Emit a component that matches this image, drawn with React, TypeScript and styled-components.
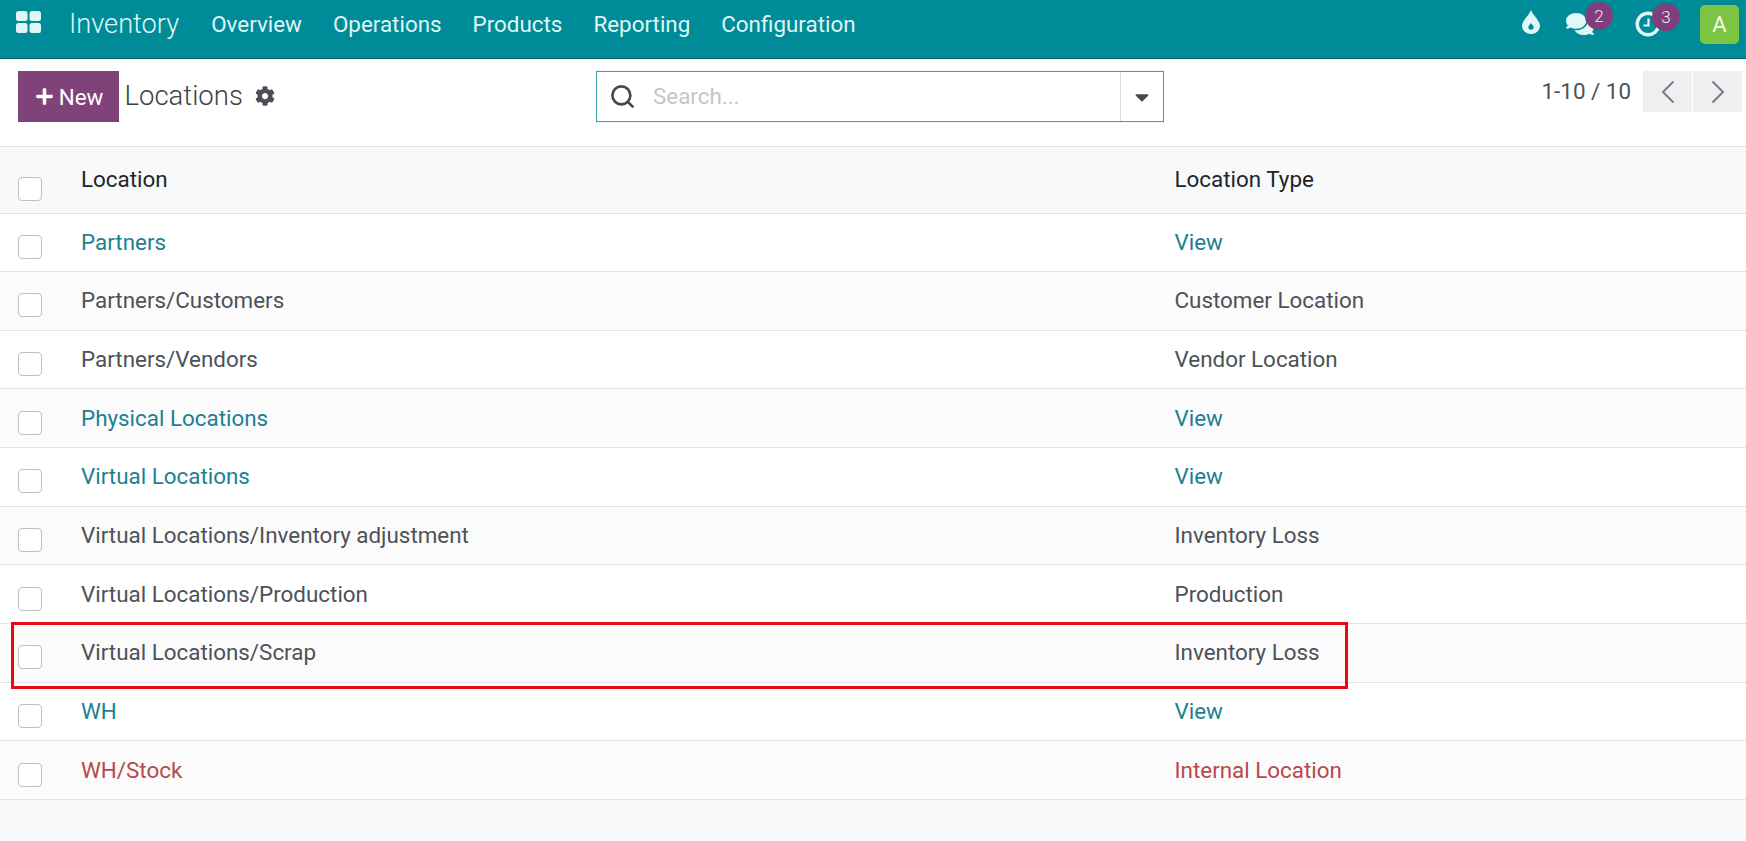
import React from 'react';
import styled, {createGlobalStyle} from 'styled-components';
import {FaCaretDown, FaCog, FaComments, FaPlus} from 'react-icons/fa';
import {ChevronLeft, ChevronRight, Search} from 'lucide-react';

const GlobalStyle = createGlobalStyle`
    html, body {
        margin: 0;
        padding: 0;
        background: #f8f9fb;
        font-family: Roboto, "Liberation Sans", sans-serif;
    }
`;

const Page = styled.div`
    width: 1746px;
    height: 841px;
    overflow: hidden;
    display: flex;
    flex-direction: column;
    background: #f8f9fb;
`;

const TopBar = styled.header`
    height: 59px;
    flex: none;
    box-sizing: border-box;
    display: flex;
    align-items: center;
    padding-bottom: 10px;
    background: #008b99;
    border-bottom: 1px solid #0d5b62;
    color: #dff7f7;
`;

const AppsIcon = styled.svg`
    width: 25px;
    height: 22px;
    margin: -4px 0 0 16px;
    fill: #e0f6f6;
`;

const Brand = styled.span`
    font-size: 27.2px;
    font-weight: 300;
    margin-left: 28px;
    margin-right: 32px;
`;

const NavItem = styled.span`
    font-size: 22.4px;
    margin-right: 31px;
    color: #dff7f7;
`;

const Systray = styled.div`
    margin-left: auto;
    display: flex;
    align-items: center;
`;

const TrayIcon = styled.span<{$gap: number}>`
    position: relative;
    display: flex;
    align-items: center;
    justify-content: center;
    margin-right: ${p => p.$gap}px;
    color: #e0f8f8;
`;

const DropIcon = styled.svg`
    width: 18px;
    height: 24px;
    margin-top: -4px;
`;

const Badge = styled.span`
    position: absolute;
    top: -8px;
    right: -19px;
    width: 28px;
    height: 28px;
    border-radius: 50%;
    background: #7f3f7a;
    color: #f2e6f0;
    font-size: 17px;
    font-weight: 300;
    display: flex;
    align-items: center;
    justify-content: center;
`;

const Avatar = styled.span`
    width: 39px;
    height: 39px;
    margin-right: 7px;
    margin-top: 1px;
    border-radius: 5px;
    background: #7cc444;
    color: #f2fbe8;
    font-size: 22px;
    display: flex;
    align-items: center;
    justify-content: center;
`;

const ControlPanel = styled.div`
    height: 88px;
    flex: none;
    position: relative;
    display: flex;
    align-items: flex-start;
    padding: 12px 4px 0 18px;
    box-sizing: border-box;
    background: #fff;
    border-bottom: 1px solid #dee2e6;
`;

const NewButton = styled.button`
    width: 101px;
    height: 51px;
    border: 0;
    padding: 0 0 0 1px;
    background: #7f4279;
    color: #fff;
    font: 400 22.4px Roboto, sans-serif;
    display: flex;
    align-items: center;
    justify-content: center;
    gap: 5px;
`;

const Title = styled.span`
    font-size: 27.5px;
    font-weight: 300;
    color: #3c4147;
    margin: 9px 0 0 5.5px;
    line-height: 32px;
`;

const Gear = styled(FaCog)`
    width: 20px;
    height: 20px;
    margin: 15px 0 0 12px;
    color: #4a4f55;
`;

const SearchBox = styled.div`
    position: absolute;
    left: 596px;
    top: 12px;
    width: 568px;
    height: 51px;
    box-sizing: border-box;
    display: flex;
    align-items: center;
    border: 1px solid #3fa5ac;
    box-shadow: 0 0 1px #9fd6da;
`;

const SearchIcon = styled(Search)`
    margin-left: 12px;
    color: #45494e;
`;

const Placeholder = styled.span`
    margin-left: 17px;
    margin-top: -1px;
    flex: 1;
    font-size: 22.4px;
    color: #c2c6cb;
`;

const DropToggle = styled.span`
    width: 42px;
    height: 100%;
    display: flex;
    align-items: center;
    justify-content: center;
    border-left: 1px solid #d5dbdc;
    color: #45494e;
`;

const Pager = styled.div`
    margin-left: auto;
    display: flex;
    align-items: center;
    gap: 12px;
    color: #4c5157;
    font-size: 22.4px;
    height: 41px;
`;

const PagerCount = styled.span`
    margin-top: -2px;
`;

const PagerButtons = styled.div`
    display: flex;
    gap: 1px;
`;

const PagerButton = styled.span`
    width: 49px;
    height: 41px;
    background: #eeeff1;
    color: #7a7d82;
    display: flex;
    align-items: center;
    justify-content: center;
`;

const Table = styled.div`
    position: relative;
    flex: none;
`;

const Row = styled.div<{$head?: boolean; $even?: boolean}>`
    height: ${p => (p.$head ? '66.5px' : '58.65px')};
    box-sizing: border-box;
    display: grid;
    grid-template-columns: 81px 1093.5px 1fr;
    align-items: center;
    padding-bottom: 1px;
    border-bottom: 1px solid ${p => (p.$head ? '#dcdfe3' : '#dfe2e6')};
    background: ${p => (p.$head ? '#f8f9fb' : p.$even ? '#fbfbfc' : '#fff')};
    font-size: 22.4px;
    color: ${p => (p.$head ? '#212529' : '#4c5258')};
`;

const CheckCell = styled.div<{$head?: boolean}>`
    padding: ${p => (p.$head ? '20px' : '10px')} 0 0 18px;
    display: flex;
`;

const Check = styled.span`
    width: 24px;
    height: 24px;
    box-sizing: border-box;
    border: 1px solid #bcbfc3;
    border-radius: 4px;
    background: #fff;
`;

const Cell = styled.span<{$tone?: 'link' | 'danger'}>`
    color: ${p => (p.$tone === 'link' ? '#1d7f94' : p.$tone === 'danger' ? '#b8494b' : 'inherit')};
`;

const Highlight = styled.div`
    position: absolute;
    left: 11px;
    top: 475px;
    width: 1337px;
    height: 67px;
    box-sizing: border-box;
    border: 3px solid #e60a12;
    pointer-events: none;
`;

type Tone = 'link' | 'danger' | undefined;

const rows: Array<[string, string, Tone]> = [
    ['Partners', 'View', 'link'],
    ['Partners/Customers', 'Customer Location', undefined],
    ['Partners/Vendors', 'Vendor Location', undefined],
    ['Physical Locations', 'View', 'link'],
    ['Virtual Locations', 'View', 'link'],
    ['Virtual Locations/Inventory adjustment', 'Inventory Loss', undefined],
    ['Virtual Locations/Production', 'Production', undefined],
    ['Virtual Locations/Scrap', 'Inventory Loss', undefined],
    ['WH', 'View', 'link'],
    ['WH/Stock', 'Internal Location', 'danger'],
];

const App = () => {
    return (
        <Page>
            <GlobalStyle/>
            <TopBar>
                <AppsIcon viewBox='0 0 25 22'>
                    <rect x='0' y='0' width='11.5' height='10' rx='2.5'/>
                    <rect x='13.5' y='0' width='11.5' height='10' rx='2.5'/>
                    <rect x='0' y='12' width='11.5' height='10' rx='2.5'/>
                    <rect x='13.5' y='12' width='11.5' height='10' rx='2.5'/>
                </AppsIcon>
                <Brand>{'Inventory'}</Brand>
                <NavItem>{'Overview'}</NavItem>
                <NavItem>{'Operations'}</NavItem>
                <NavItem>{'Products'}</NavItem>
                <NavItem>{'Reporting'}</NavItem>
                <NavItem>{'Configuration'}</NavItem>
                <Systray>
                    <TrayIcon $gap={26}>
                        <DropIcon viewBox='0 0 18 24'>
                            <path fill='currentColor' d='M9 0C10.500 5 18 10.500 18 16a9 8 0 0 1-18 0C0 10.500 7.500 5 9 0z'/>
                            <path fill='#008b99' d='M9 13c.8 1.400 2.600 2.700 2.600 4.200a2.600 2.500 0 0 1-5.200 0C6.400 15.700 8.200 14.400 9 13z'/>
                        </DropIcon>
                    </TrayIcon>
                    <TrayIcon $gap={41}>
                        <FaComments size={28}/>
                        <Badge>{'2'}</Badge>
                    </TrayIcon>
                    <TrayIcon $gap={39}>
                        <svg width='26' height='26' viewBox='0 0 26 26' fill='none' stroke='currentColor'>
                            <circle cx='13' cy='13' r='10.8' strokeWidth='3.4'/>
                            <path d='M13.500 7.500v7h-5' strokeWidth='2.2'/>
                        </svg>
                        <Badge>{'3'}</Badge>
                    </TrayIcon>
                    <Avatar>{'A'}</Avatar>
                </Systray>
            </TopBar>
            <ControlPanel>
                <NewButton><FaPlus size={19}/>{'New'}</NewButton>
                <Title>{'Locations'}</Title>
                <Gear/>
                <SearchBox>
                    <SearchIcon size={27} strokeWidth={2.3}/>
                    <Placeholder>{'Search...'}</Placeholder>
                    <DropToggle><FaCaretDown size={22}/></DropToggle>
                </SearchBox>
                <Pager>
                    <PagerCount>{'1-10 / 10'}</PagerCount>
                    <PagerButtons>
                        <PagerButton><ChevronLeft size={40} strokeWidth={1.2}/></PagerButton>
                        <PagerButton><ChevronRight size={40} strokeWidth={1.2}/></PagerButton>
                    </PagerButtons>
                </Pager>
            </ControlPanel>
            <Table>
                <Row $head>
                    <CheckCell $head><Check/></CheckCell>
                    <Cell>{'Location'}</Cell>
                    <Cell>{'Location Type'}</Cell>
                </Row>
                {rows.map(([name, type, tone], i) => (
                    <Row key={name} $even={i % 2 === 1}>
                        <CheckCell><Check/></CheckCell>
                        <Cell $tone={tone}>{name}</Cell>
                        <Cell $tone={tone}>{type}</Cell>
                    </Row>
                ))}
                <Highlight/>
            </Table>
        </Page>
    );
};

export default App;
